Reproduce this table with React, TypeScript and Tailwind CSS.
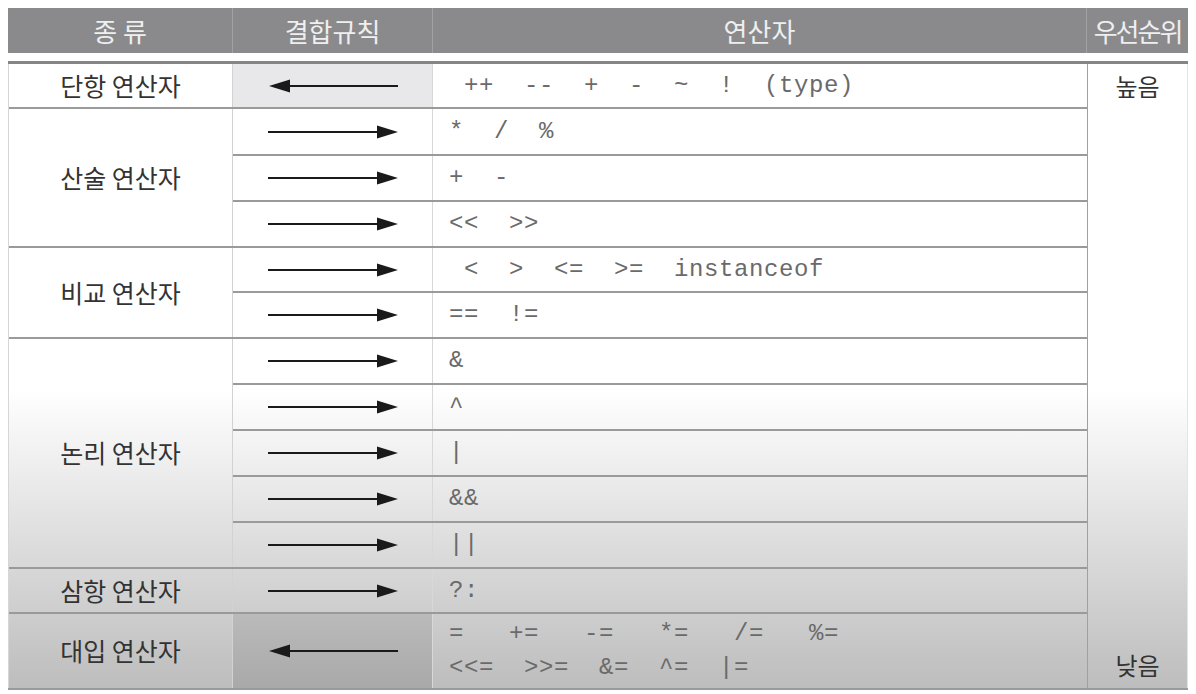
type Row = {
  dir: "left" | "right";
  ops: string[];
  h: string;
  bg?: string;
};

type Group = {
  label: string;
  rows: Row[];
};

const groups: Group[] = [
  {
    label: "단항 연산자",
    rows: [{ dir: "left", ops: [" ++  --  +  -  ~  !  (type)"], h: "h-[43px]", bg: "bg-[#e8e8ea]" }],
  },
  {
    label: "산술 연산자",
    rows: [
      { dir: "right", ops: ["*  /  %"], h: "h-[45px]" },
      { dir: "right", ops: ["+  -"], h: "h-[46px]" },
      { dir: "right", ops: ["<<  >>"], h: "h-[46px]" },
    ],
  },
  {
    label: "비교 연산자",
    rows: [
      { dir: "right", ops: [" <  >  <=  >=  instanceof"], h: "h-[43px]" },
      { dir: "right", ops: ["==  !="], h: "h-[46px]" },
    ],
  },
  {
    label: "논리 연산자",
    rows: [
      { dir: "right", ops: ["&"], h: "h-[44px]" },
      { dir: "right", ops: ["^"], h: "h-[46px]" },
      { dir: "right", ops: ["|"], h: "h-[46px]" },
      { dir: "right", ops: ["&&"], h: "h-[46px]" },
      { dir: "right", ops: ["||"], h: "h-[46px]" },
    ],
  },
  {
    label: "삼항 연산자",
    rows: [{ dir: "right", ops: ["?:"], h: "h-[43px]" }],
  },
  {
    label: "대입 연산자",
    rows: [
      {
        dir: "left",
        ops: ["=   +=   -=   *=   /=   %=", "<<=  >>=  &=  ^=  |="],
        h: "h-[74px]",
        bg: "bg-[linear-gradient(to_bottom,#bababa,#a9a9a9)]",
      },
    ],
  },
];

function Arrow({ dir }: { dir: "left" | "right" }) {
  return (
    <svg width="130" height="14" viewBox="0 0 130 14">
      {dir === "right" ? (
        <>
          <line x1="0" y1="7" x2="112" y2="7" stroke="#1a1a1a" strokeWidth="2.2" />
          <polygon points="109,0.5 130,7 109,13.5" fill="#1a1a1a" />
        </>
      ) : (
        <>
          <line x1="18" y1="7" x2="130" y2="7" stroke="#1a1a1a" strokeWidth="2.2" />
          <polygon points="1,7 22,0.5 22,13.5" fill="#1a1a1a" />
        </>
      )}
    </svg>
  );
}

const kr = "font-['Noto_Sans_CJK_KR','Noto_Sans',sans-serif]";

export default function App() {
  return (
    <div className="w-[1196px] h-[694px] bg-white pt-[8px] pl-[8px]">
      {/* header */}
      <div
        className={`flex w-[1180px] h-[45px] bg-[#8a8a8c] text-[#efefef] text-[26px] leading-none ${kr}`}
      >
        <div className="w-[225px] flex items-center justify-center border-r border-[#a2a2a4]">
          종 류
        </div>
        <div className="w-[200px] flex items-center justify-center border-r border-[#a2a2a4]">
          결합규칙
        </div>
        <div className="w-[654px] flex items-center justify-center border-r border-[#a2a2a4]">
          연산자
        </div>
        <div className="flex-1 flex items-center justify-center tracking-[-2px]">
          우선순위
        </div>
      </div>

      {/* body */}
      <div className="mt-[8px] w-[1180px] flex border-t-[3px] border-b-2 border-t-[#858585] border-b-[#9a9a9a] bg-[linear-gradient(to_bottom,#ffffff_0%,#ffffff_52%,#bdbdbd_100%)]">
        <div className="w-[1079px] flex flex-col border-l border-l-[#d6d6d6]">
          {groups.map((g, gi) => (
            <div
              key={gi}
              className={`flex ${gi > 0 ? "border-t-2 border-[#9a9a9a]" : ""}`}
            >
              <div
                className={`w-[224px] flex items-center justify-center border-r border-r-[#d2d2d2] text-[25px] text-[#333333] ${kr}`}
              >
                {g.label}
              </div>
              <div className="flex-1 flex flex-col">
                {g.rows.map((r, ri) => (
                  <div
                    key={ri}
                    className={`flex ${r.h} ${ri > 0 ? "border-t-2 border-[#9a9a9a]" : ""}`}
                  >
                    <div
                      className={`w-[200px] flex items-center justify-center border-r border-r-[#d8d8d8] ${r.bg ?? ""}`}
                    >
                      <Arrow dir={r.dir} />
                    </div>
                    <div className="flex-1 flex flex-col justify-center gap-[10px] pl-[16px] font-['Liberation_Mono',monospace] text-[24px] leading-none tracking-[0.6px] text-[#6a6a6a]">
                      {r.ops.map((o, oi) => (
                        <div key={oi} className="whitespace-pre">
                          {o}
                        </div>
                      ))}
                    </div>
                  </div>
                ))}
              </div>
            </div>
          ))}
        </div>
        <div
          className={`flex-1 flex flex-col justify-between border-l border-l-[#a0a0a0] border-r border-r-[#e4e4e4] text-[24px] text-[#333333] ${kr}`}
        >
          <div className="h-[43px] flex items-center justify-center">높음</div>
          <div className="h-[46px] flex items-center justify-center">낮음</div>
        </div>
      </div>
    </div>
  );
}
